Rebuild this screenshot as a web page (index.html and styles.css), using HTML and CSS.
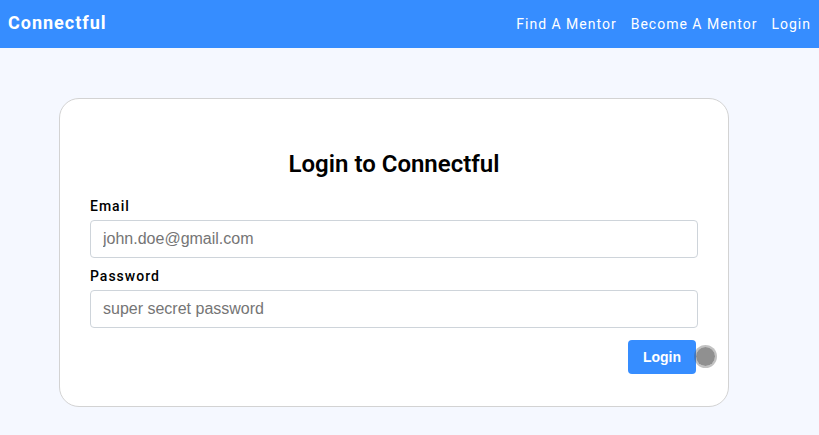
FILE: index.html
```html
<!DOCTYPE html>
<html lang="en">
<head>
<meta charset="utf-8">
<meta name="viewport" content="width=device-width, initial-scale=1">
<title>Connectful</title>
<link rel="stylesheet" href="styles.css">
</head>
<body>
<header class="navbar">
  <a class="brand" href="#">Connectful</a>
  <nav class="nav-links">
    <a href="#">Find A Mentor</a>
    <a href="#">Become A Mentor</a>
    <a href="#">Login</a>
  </nav>
</header>
<main class="page">
  <form class="card">
    <h1 class="title">Login to Connectful</h1>
    <div class="field">
      <label for="email">Email</label>
      <input id="email" type="email" placeholder="john.doe@gmail.com">
    </div>
    <div class="field">
      <label for="password">Password</label>
      <input id="password" type="password" placeholder="super secret password">
    </div>
    <div class="actions">
      <button class="submit" type="button">Login</button>
      <span class="pointer"></span>
    </div>
  </form>
</main>
</body>
</html>
```
FILE: styles.css
```css
* {
  box-sizing: border-box;
}

body {
  margin: 0;
  background: #f5f8ff;
  color: #000;
  font-family: Roboto, sans-serif;
  font-size: 14px;
}

.navbar {
  display: flex;
  align-items: center;
  justify-content: space-between;
  height: 48px;
  padding: 0 8px;
  background: #368dff;
}

.navbar a {
  color: #fff;
  letter-spacing: 1px;
  text-decoration: none;
}

.navbar .brand {
  font-size: 18px;
  font-weight: 700;
  line-height: 20px;
  padding-bottom: 2px;
}

.nav-links {
  display: flex;
  gap: 14px;
}

.page {
  padding: 50px 90px 28px 59px;
}

.card {
  padding: 50px 30px 32px;
  border: 1px solid #d3d3d3;
  border-radius: 20px;
  background: #fff;
}

.title {
  margin: 0 0 19px;
  font-size: 24px;
  font-weight: 600;
  line-height: 30px;
  text-align: center;
}

.field {
  margin-bottom: 10px;
}

.field label {
  display: block;
  margin-bottom: 6px;
  font-weight: 500;
  letter-spacing: 1px;
  line-height: 16px;
}

.field input {
  display: block;
  width: 100%;
  height: 38px;
  padding: 0 12px;
  border: 1px solid #ced4da;
  border-radius: 4px;
  background: #fff;
  font-family: "Liberation Sans", Arial, sans-serif;
  font-size: 16px;
}

.field input::placeholder {
  color: #757575;
}

.actions {
  position: relative;
  display: flex;
  justify-content: flex-end;
  margin-top: 12px;
  padding-right: 2px;
}

.submit {
  height: 34px;
  padding: 0 15px;
  border: 0;
  border-radius: 4px;
  background: #368dff;
  color: #fff;
  font-family: "Liberation Sans", Arial, sans-serif;
  font-size: 14px;
  font-weight: 700;
}

.pointer {
  position: absolute;
  top: 5px;
  right: -19px;
  width: 23px;
  height: 23px;
  border: 2px solid rgba(80, 80, 80, 0.35);
  border-radius: 50%;
  background: #909090;
  background-clip: padding-box;
}
```
